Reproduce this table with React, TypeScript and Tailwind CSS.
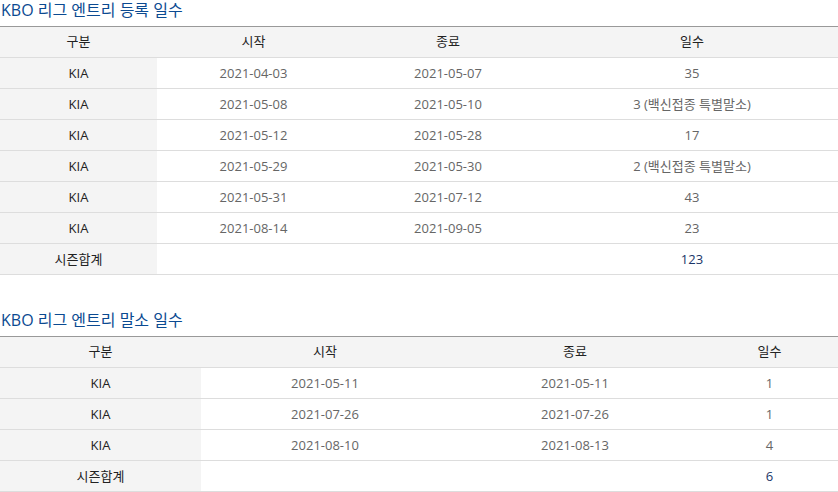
import React from "react";

type Row = { team: string; start: string; end: string; days: string };

const reg: Row[] = [
  { team: "KIA", start: "2021-04-03", end: "2021-05-07", days: "35" },
  { team: "KIA", start: "2021-05-08", end: "2021-05-10", days: "3 (백신접종 특별말소)" },
  { team: "KIA", start: "2021-05-12", end: "2021-05-28", days: "17" },
  { team: "KIA", start: "2021-05-29", end: "2021-05-30", days: "2 (백신접종 특별말소)" },
  { team: "KIA", start: "2021-05-31", end: "2021-07-12", days: "43" },
  { team: "KIA", start: "2021-08-14", end: "2021-09-05", days: "23" },
];

const dereg: Row[] = [
  { team: "KIA", start: "2021-05-11", end: "2021-05-11", days: "1" },
  { team: "KIA", start: "2021-07-26", end: "2021-07-26", days: "1" },
  { team: "KIA", start: "2021-08-10", end: "2021-08-13", days: "4" },
];

function Table({ title, rows, total, widths }: { title: string; rows: Row[]; total: string; widths: number[] }) {
  return (
    <div>
      <h3 className="text-[16px] leading-[20px] text-[#0b4a91] pl-[1px] mb-[6px]">{title}</h3>
      <table className="w-full border-collapse table-fixed border-t border-t-[#999999] text-[13px]">
        <colgroup>
          {widths.map((w, i) => (
            <col key={i} style={{ width: w }} />
          ))}
        </colgroup>
        <thead>
          <tr className="h-[31px] bg-[#f4f4f4] border-b border-[#dddddd] text-[#222222]">
            <th className="font-normal p-0">구분</th>
            <th className="font-normal p-0">시작</th>
            <th className="font-normal p-0">종료</th>
            <th className="font-normal p-0">일수</th>
          </tr>
        </thead>
        <tbody>
          {rows.map((r, i) => (
            <tr key={i} className="h-[31px] border-b border-[#dddddd] text-center">
              <td className="bg-[#f4f4f4] text-[#222222] p-0 pt-[1px]">{r.team}</td>
              <td className="text-[#666666] p-0 pt-[1px]">{r.start}</td>
              <td className="text-[#666666] p-0 pt-[1px]">{r.end}</td>
              <td className="text-[#666666] p-0 pt-[1px]">{r.days}</td>
            </tr>
          ))}
          <tr className="h-[31px] border-b border-[#dddddd] text-center">
            <td className="bg-[#f4f4f4] text-[#222222] p-0 pt-[1px]">시즌합계</td>
            <td className="p-0"></td>
            <td className="p-0"></td>
            <td className="text-[#1a3668] p-0 pt-[1px]">{total}</td>
          </tr>
        </tbody>
      </table>
    </div>
  );
}

export default function App() {
  return (
    <div
      className="w-[838px] bg-white"
      style={{ fontFamily: '"Open Sans", "Noto Sans CJK KR", sans-serif' }}
    >
      <Table title="KBO 리그 엔트리 등록 일수" rows={reg} total="123" widths={[157, 193, 196, 292]} />
      <div className="h-[35px]" />
      <Table title="KBO 리그 엔트리 말소 일수" rows={dereg} total="6" widths={[201, 248, 252, 137]} />
    </div>
  );
}
